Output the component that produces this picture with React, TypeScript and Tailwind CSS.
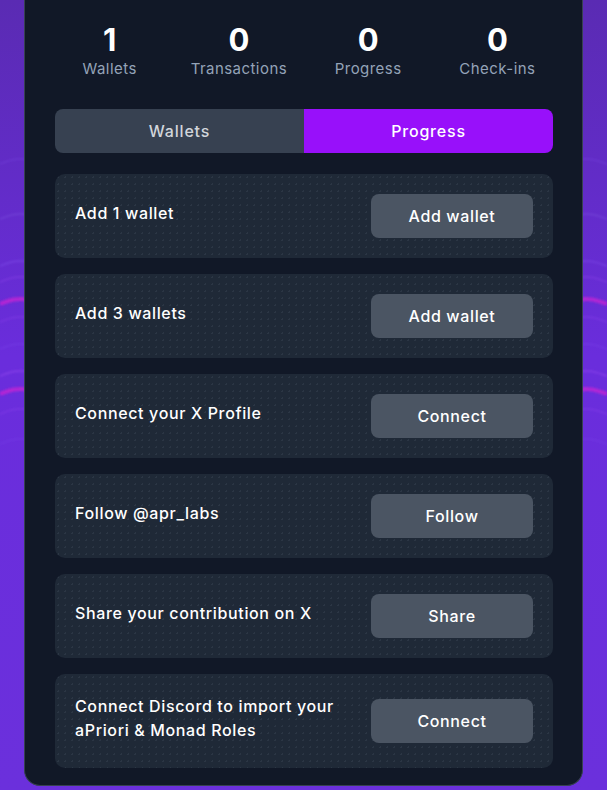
import React from "react"

const stats = [
  { value: "1", label: "Wallets" },
  { value: "0", label: "Transactions" },
  { value: "0", label: "Progress" },
  { value: "0", label: "Check-ins" },
]

const tasks = [
  { title: "Add 1 wallet", action: "Add wallet" },
  { title: "Add 3 wallets", action: "Add wallet" },
  { title: "Connect your X Profile", action: "Connect" },
  { title: "Follow @apr_labs", action: "Follow" },
  { title: "Share your contribution on X", action: "Share" },
  { title: "Connect Discord to import your aPriori & Monad Roles", action: "Connect" },
]

// background light streaks, only the edges show beside the panel
function Waves() {
  const lines = [
    { y: 160, c: "#8b5cf6", o: 0.35, w: 1 },
    { y: 215, c: "#a78bfa", o: 0.3, w: 1 },
    { y: 262, c: "#8b5cf6", o: 0.4, w: 1.5 },
    { y: 278, c: "#a855f7", o: 0.45, w: 1 },
    { y: 300, c: "#c026d3", o: 0.85, w: 4 },
    { y: 318, c: "#a855f7", o: 0.4, w: 1 },
    { y: 345, c: "#8b5cf6", o: 0.35, w: 1 },
    { y: 372, c: "#a855f7", o: 0.45, w: 1.5 },
    { y: 390, c: "#c026d3", o: 0.85, w: 4 },
    { y: 410, c: "#a855f7", o: 0.4, w: 1 },
    { y: 440, c: "#8b5cf6", o: 0.3, w: 1 },
  ]
  return (
    <svg className="absolute inset-0 h-full w-full" viewBox="0 0 607 790" preserveAspectRatio="none">
      <defs>
        <linearGradient id="bg" x1="0" y1="0" x2="0" y2="1">
          <stop offset="0" stopColor="#5a2bb3" />
          <stop offset="0.45" stopColor="#6a2ddc" />
          <stop offset="1" stopColor="#6b30dc" />
        </linearGradient>
        <filter id="soft">
          <feGaussianBlur stdDeviation="0.8" />
        </filter>
      </defs>
      <rect width="607" height="790" fill="url(#bg)" />
      <g filter="url(#soft)" fill="none">
        {lines.map((l, i) => (
          <g key={i} stroke={l.c} strokeOpacity={l.o} strokeWidth={l.w}>
            <path d={`M0 ${l.y + 4} C 8 ${l.y + 1}, 16 ${l.y - 3}, 30 ${l.y}`} />
            <path d={`M578 ${l.y} C 590 ${l.y - 3}, 598 ${l.y + 1}, 607 ${l.y + 4}`} />
          </g>
        ))}
      </g>
    </svg>
  )
}

export default function App() {
  return (
    <div className="relative h-[790px] w-[607px] overflow-hidden font-['Inter',sans-serif]">
      <Waves />
      <div className="relative mx-6 rounded-b-2xl border-x border-b border-[#374151] bg-[#111827] pt-5 pb-[17px]">
        <div className="grid grid-cols-4 px-5">
          {stats.map((s) => (
            <div key={s.label} className="flex flex-col items-center">
              <span className="text-[31px] font-bold leading-[40px] text-white">{s.value}</span>
              <span className="-mt-px text-[15px] leading-5 tracking-[0.03em] text-[#94a3b8]">{s.label}</span>
            </div>
          ))}
        </div>

        <div className="ml-[30px] mr-[29px] mt-[30px] flex h-11 overflow-hidden rounded-lg text-base font-medium tracking-[0.05em]">
          <div className="flex flex-1 items-center justify-center bg-[#374151] text-[#d1d5db]">Wallets</div>
          <div className="flex flex-1 items-center justify-center bg-[#9810fa] text-white">Progress</div>
        </div>

        <div className="ml-[30px] mr-[29px] mt-[21px] flex flex-col gap-4">
          {tasks.map((t) => (
            <div
              key={t.title}
              className="flex min-h-[84px] items-center justify-between gap-4 rounded-[10px] bg-[#1f2937] bg-[radial-gradient(rgba(148,163,184,0.1)_1px,transparent_1px)] bg-[size:7px_7px] px-5 py-5"
            >
              <p className="max-w-[282px] pb-[6px] text-base font-medium leading-6 tracking-[0.04em] text-white">
                {t.title}
              </p>
              <button className="h-11 w-[162px] shrink-0 rounded-lg bg-[#4b5563] text-base font-medium tracking-[0.04em] text-white">
                {t.action}
              </button>
            </div>
          ))}
        </div>
      </div>
    </div>
  )
}
